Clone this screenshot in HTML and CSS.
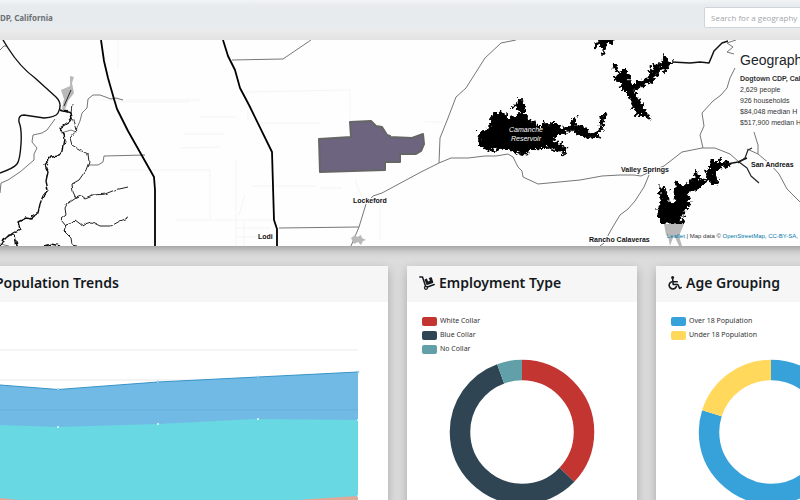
FILE: index.html
```
<!DOCTYPE html>
<html lang="en">
<head>
<meta charset="utf-8">
<title>Dogtown CDP, California</title>
<link rel="stylesheet" href="styles.css">
</head>
<body>
<header class="topbar">
  <span class="crumb">DP, California</span>
  <input class="search" type="text" aria-label="Search for a geography" placeholder="Search for a geography">
</header>
<section class="map">
  <svg class="map-art" viewBox="0 40 800 206" preserveAspectRatio="xMinYMin slice" role="img" aria-label="Area map">
    <defs>
      <filter id="shore" x="-10%" y="-10%" width="120%" height="120%">
        <feTurbulence type="fractalNoise" baseFrequency="0.28" numOctaves="2" seed="4"/>
        <feDisplacementMap in="SourceGraphic" scale="9" xChannelSelector="R" yChannelSelector="G"/>
      </filter>
      <filter id="bank" x="-10%" y="-10%" width="120%" height="120%">
        <feTurbulence type="fractalNoise" baseFrequency="0.15" numOctaves="2" seed="2"/>
        <feDisplacementMap in="SourceGraphic" scale="4" xChannelSelector="R" yChannelSelector="G"/>
      </filter>
    </defs>
    <g class="faint">
      <path d="M118 40V68M100 100H200M115 102H190M200 117H236M183 134H225M245 92L350 90V119M260 123H320M248 110V120M425 122H443M120 170H210V220M175 220H272M236 160V246M245 195L239 215M253 186H315M320 188H342M355 180L363 200M236 228H270M236 237H270M244 220V246M180 148L220 147M380 200V240"/>
    </g>
    <g class="thin">
      <path d="M232 60L283 59L311 40M516 40L501 43L485 58L466 88L456 97L448 118L440 138L439 163M351 246L359 227L366 204L373 196L382 193L421 172L439 163L451 158H468L485 156H496L508 154L513 157L518 167L522 171L523 177L538 184L580 180L602 176L620 175H634L641 176L654 170L664 166L682 152L692 150L702 148H715L730 154L739 162M279 228L359 227M649 175L644 187L635 201L628 209L620 215L611 230L604 243L600 246M703 148L700 135L704 126L702 113L713 101L721 95L727 88L730 78L735 68M754 132L758 145V154L747 149M758 154L770 164L779 174L787 189L800 202M736 40L727 43L733 47L727 52L734 54M0 50L4 46L7 46M55 119L47 130L42 133L33 135L32 142L37 148L34 154L34 160L20 172L8 180L1 183L0 193M123 100L116 98L111 99L100 95H93L88 99L87 108L82 113L80 121L76 130M61 133L71 130L76 132M88 165L98 165L103 162L104 156L145 155M0 244L9 246"/>
    </g>
    <g filter="url(#bank)">
      <path class="river" d="M72 104L71 113L76 131L70 138L72 145L80 150L88 154L89 162L86 170L79 180L72 184L73 192L76 198L67 204L65 208L66 215L61 219L66 225L64 231L71 238L72 244L77 245M76 198L81 196L85 199L95 195L105 194L115 190L128 187M66 225L72 223L75 220L83 226L86 224L92 222L100 226H111L120 221L128 218"/>
      <path class="river2" d="M60 110L71 113L72 118L69 122L60 128L64 134L65 140L63 150L59 156L51 157L45 165L48 172L46 181L48 190L43 196L40 204L38 213L33 216L32 219L26 218L18 222L20 229L13 233L3 240L0 246M2 242L9 235L15 235L17 246M44 246L51 244L60 246"/>
    </g>
    <path class="river2" d="M3 40L8 48Q20 67 35 78L56 97Q63 104 58 113Q56 117 44 118L24 115Q18 115 19 122Q22 129 21 144Q20 160 17 164Q14 168 0 173"/>
    <path class="gray" d="M70 76L74 77L72 83L74 93L68 101L65 110L62 109L64 99L61 90L70 86ZM351 238L355 235L357 237L361 235L362 238L366 240L363 241L361 245L358 242L354 244Z"/>
    <path class="river" d="M71 90L64 106"/>
    <path class="highway" d="M101 40L104 61L108 78L114 99L117 109L128 131L154 177L155 190V246M223 40L228 56L235 70L240 88L249 105L272 152L274 220L277 229V246"/>
    <g filter="url(#shore)">
      <path class="lake" d="M478 134L482 130L488 129L491 125L490 119L494 113L499 112L506 113L507 120L513 116L520 114L519 110L512 107L517 104L520 98L523 104L526 106L525 111L523 113L528 120L532 122L535 121L538 128L544 122L550 125L552 122L558 124L560 129L570 127L572 119L576 117L575 126L584 126L590 135L598 132L601 126L600 116L607 113L603 121L602 131L595 138L590 139L584 137L579 134L571 130L561 133L557 137L552 140L558 143L563 145L566 150L564 154L559 151L553 149L545 146L541 150L532 149L526 154L519 153L509 150L500 148L490 151L482 148L479 145L480 140Z"/>
      <path class="lake" d="M601 38H615L611 43L606 44L605 49L603 55L603 48L600 45L596 48L594 46Z"/>
      <path class="lake" d="M611 66L613 63L617 67L620 73L624 69L628 73L629 79L633 86L638 81L645 80L651 73L649 68L655 70L652 62L659 67L660 61L663 63L664 53L668 60L674 63L669 65L665 73L661 67L657 75L654 80L648 83L642 87L634 90L637 97L643 106L650 119L647 118L641 113L637 116L629 96L624 91L620 84L616 81L615 77L619 76L615 68Z"/>
      <path class="lake" d="M659 187L663 187L667 193L668 200L673 204L676 198L672 190L677 186L675 180L681 186L687 183L692 181L695 174L696 169L699 178L708 180L706 172L708 168L711 166V158L717 164L720 158L722 163L728 162L730 166L720 168L715 173L718 184L714 183L709 181L703 184L697 190L691 190L687 195L690 201L688 208L683 211L685 216L680 216L683 224H664L658 218L658 206L661 200Z"/>
    </g>
    <path class="creek" d="M672 62L690 63L700 62L709 63L714 51L722 43L728 41M588 137L596 136L601 138M727 164L738 162L747 158"/>
    <path class="road-mid" d="M739 162L747 168L751 176L759 183M738 163L745 158L748 150L752 148"/>
    <path class="gray" d="M664 224H684L679 236L682 246H679L674 235L670 246L668 236L666 235Z"/>
    <path class="region" d="M319 139L351 137L350 122L371 121L376 126L382 127L387 135L390 136V137L412 138L423 134L424 144L421 151L416 154H400V162H385V170L320 172Z"/>
    <g class="place">
      <text x="353" y="203">Lockeford</text>
      <text x="258" y="239">Lodi</text>
      <text x="621" y="172">Valley Springs</text>
      <text x="751" y="167">San Andreas</text>
      <text x="589" y="242">Rancho Calaveras</text>
    </g>
    <g class="water">
      <text x="526" y="132">Camanche</text>
      <text x="526" y="141">Reservoir</text>
    </g>
  </svg>
  <aside class="info">
    <h2>Geography</h2>
    <strong>Dogtown CDP, California</strong>
    <span>2,629 people</span>
    <span>926 households</span>
    <span>$84,048 median H</span>
    <span>$517,900 median H</span>
  </aside>
  <div class="credit"><a href="#leaflet">Leaflet</a> | Map data © <a href="#osm">OpenStreetMap</a>, <a href="#license">CC-BY-SA</a>,</div>
</section>
<main class="cards">
  <article class="card">
    <h2 class="card-title">Population Trends</h2>
    <svg class="trend" viewBox="-20 302 408 218" role="img" aria-label="Population over time">
      <path class="gridline" d="M-20 350H358M-20 380H358"/>
      <path fill="#71bae6" d="M-20 382L0 385L58 389.500L158 382L258 377L358 372V520H-20Z"/>
      <path fill="#68d8e3" d="M-20 424L0 425L58 427L158 424L258 419L358 420V520H-20Z"/>
      <path fill="#dea999" d="M-20 496L0 498L58 504L158 510L258 504L310 499L358 496V520H-20Z"/>
      <path class="gridline-over" d="M-20 410H358"/>
      <path class="trend-line" d="M-20 382L0 385L58 389.500L158 382L258 377L358 372"/>
      <g class="dots"><circle cx="58" cy="389.500" r="1"/><circle cx="158" cy="382" r="1"/><circle cx="258" cy="377" r="1"/><circle cx="358" cy="372" r="1"/></g>
      <g class="dots-pale"><circle cx="58" cy="427" r="1"/><circle cx="158" cy="424" r="1"/><circle cx="258" cy="419" r="1"/><circle cx="358" cy="420" r="1"/><circle cx="358" cy="496" r="1"/></g>
    </svg>
  </article>
  <article class="card">
    <h2 class="card-title">
      <svg class="icon" viewBox="0 0 16 14" aria-hidden="true">
        <path d="M.8 1H3.500L6.500 10M8.500 11L15.200 8.500" fill="none" stroke="currentColor" stroke-width="1.500" stroke-linecap="round" stroke-linejoin="round"/>
        <circle cx="7" cy="11.800" r="1.500" fill="none" stroke="currentColor" stroke-width="1.300"/>
        <path d="M6 3.200L7.900 2.500L9 5.400L10.900 4.700L9.800 1.900L12 1.200Q12.600 1 12.800 1.600L14.300 6.200Q14.400 6.800 13.900 7L8.300 8.900Q7.600 9 7.400 8.400L5.700 3.900Q5.600 3.400 6 3.200Z" fill="currentColor"/>
      </svg>
      Employment Type
    </h2>
    <ul class="legend">
      <li><i class="swatch red"></i>White Collar</li>
      <li><i class="swatch navy"></i>Blue Collar</li>
      <li><i class="swatch teal"></i>No Collar</li>
    </ul>
    <svg class="donut" viewBox="0 0 230 152" role="img" aria-label="Employment split">
      <g fill="none" stroke-width="20.500" transform="rotate(-90 115 74)">
        <circle cx="115" cy="74" r="62" stroke="#c23531" pathLength="1000" stroke-dasharray="371 629"/>
        <circle cx="115" cy="74" r="62" stroke="#2f4554" pathLength="1000" stroke-dasharray="573 427" stroke-dashoffset="-371"/>
        <circle cx="115" cy="74" r="62" stroke="#61a0a8" pathLength="1000" stroke-dasharray="56 944" stroke-dashoffset="-944"/>
      </g>
    </svg>
  </article>
  <article class="card">
    <h2 class="card-title">
      <svg class="icon narrow" viewBox="1 0 14 14" aria-hidden="true">
        <circle cx="5.600" cy="1.500" r="1.500" fill="currentColor"/>
        <path d="M5.700 3.500L6.200 8.500H10.800L12.700 12.300L14.200 11.600M6 5.700H10.200M4.300 5.900A3.700 3.700 0 1 0 9.300 10.600" fill="none" stroke="currentColor" stroke-width="1.600" stroke-linecap="round" stroke-linejoin="round"/>
      </svg>
      Age Grouping
    </h2>
    <ul class="legend">
      <li><i class="swatch blue"></i>Over 18 Population</li>
      <li><i class="swatch yellow"></i>Under 18 Population</li>
      <li aria-hidden="true"></li>
    </ul>
    <svg class="donut" viewBox="0 0 230 152" role="img" aria-label="Age split">
      <g fill="none" stroke-width="20.500" transform="rotate(-90 115 74)">
        <circle cx="115" cy="74" r="62" stroke="#37a2da" pathLength="1000" stroke-dasharray="799 201"/>
        <circle cx="115" cy="74" r="62" stroke="#ffd85c" pathLength="1000" stroke-dasharray="201 799" stroke-dashoffset="-799"/>
      </g>
    </svg>
  </article>
</main>
</body>
</html>
```
FILE: styles.css
```
* { box-sizing: border-box; }

body {
  margin: 0;
  height: 100vh;
  overflow: hidden;
  background: #dcdcdc;
  color: #15191d;
  font-family: "Noto Sans", sans-serif;
  font-size: 8px;
}

h2, ul { margin: 0; padding: 0; }

.topbar {
  display: flex;
  align-items: center;
  justify-content: space-between;
  height: 40px;
  padding-bottom: 6px;
  background: linear-gradient(#f1f3f4 0, #e7ebee 6px, #e7ebee 27px, #ebebeb 30px, #e4e3e3 40px);
}

.crumb {
  color: #6c7176;
  font-size: 8px;
  font-weight: 700;
}

.search {
  width: 116px;
  height: 21px;
  margin-right: -20px;
  padding: 0 6px;
  border: 1px solid #ced4da;
  border-radius: 2px;
  background: #fff;
  font: 8px "Open Sans", sans-serif;
}

.search::placeholder { color: #a2a6aa; }

.map {
  position: relative;
  overflow: hidden;
  height: 206px;
  background: #fefefe;
}

.map-art {
  display: block;
  width: 100%;
  height: 100%;
}

.map-art path { stroke-linejoin: round; }
.faint path { fill: none; stroke: #f4f4f4; }
.thin path { fill: none; stroke: #777; }
.river { fill: none; stroke: #222; }
.river2 { fill: none; stroke: #111; stroke-width: 1.4; }
.creek { fill: none; stroke: #111; stroke-width: 1.5; }
.road-mid { fill: none; stroke: #222; stroke-width: 1.2; }
.highway { fill: none; stroke: #000; stroke-width: 1.8; }
.gray { fill: #b9b9b9; }
.lake { fill: #000; stroke: #000; stroke-width: 1; }
.region { fill: #6d6480; stroke: #666; stroke-width: 2; }

.place {
  fill: #111;
  stroke: #fff;
  stroke-width: 2px;
  paint-order: stroke;
  font: bold 7px "Liberation Sans", sans-serif;
}

.water {
  fill: #fff;
  font: italic 7px "Liberation Sans", sans-serif;
  text-anchor: middle;
}

.info {
  position: absolute;
  top: 12px;
  left: calc(100% - 60px);
  display: flex;
  flex-direction: column;
  color: #333;
  font: 7px/11px "Liberation Sans", sans-serif;
  white-space: nowrap;
}

.info h2 {
  margin-bottom: 4px;
  color: #212529;
  font-size: 14px;
  font-weight: 400;
  line-height: 17px;
}

.credit {
  position: absolute;
  right: 2px;
  bottom: 5px;
  color: #333;
  font: 6px/10px "Liberation Sans", sans-serif;
}

.credit a {
  color: #0078a8;
  text-decoration: none;
}

.cards {
  position: relative;
  display: grid;
  grid-template-columns: 408fr 230fr 230fr;
  gap: 19px;
  width: calc(100% + 106px);
  margin-left: -20px;
  padding-top: 20px;
  box-shadow: inset 0 7px 8px -4px #999;
}

.card {
  background: #fff;
  box-shadow: 0 4px 10px rgba(0, 0, 0, .24);
}

.card-title {
  display: flex;
  align-items: center;
  gap: 4px;
  height: 36px;
  padding: 0 12px 2px;
  background: #f6f6f6;
  font-size: 14px;
  font-weight: 600;
  line-height: 18px;
}

.card:first-child .card-title { padding-left: 15px; }

.icon {
  width: 16px;
  height: 14px;
}

.icon.narrow { width: 14px; }

.trend, .donut {
  display: block;
  width: 100%;
}

.gridline { fill: none; stroke: #e9e9e9; }
.gridline-over { fill: none; stroke: #69afd8; }
.trend-line { fill: none; stroke: #3794c6; }
.dots { fill: #d9f0fb; stroke: #4ba5d3; stroke-width: .5px; }
.dots-pale { fill: #e7fbfd; }

.legend {
  padding: 12px 15px 2px;
  color: #333;
  font-size: 7px;
  line-height: 14px;
  list-style: none;
}

.legend li {
  display: flex;
  align-items: center;
  gap: 3px;
  height: 14px;
}

.swatch {
  width: 15px;
  height: 9px;
  border-radius: 2px;
}

.red { background: #c23531; }
.navy { background: #2f4554; }
.teal { background: #61a0a8; }
.blue { background: #37a2da; }
.yellow { background: #ffd85c; }
```
